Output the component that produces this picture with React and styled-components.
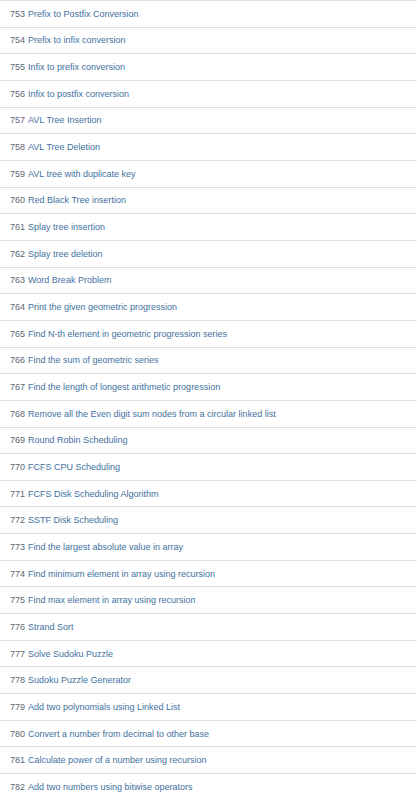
import React from "react";
import styled, { createGlobalStyle } from "styled-components";

const GlobalStyle = createGlobalStyle`
  html, body {
    margin: 0;
    padding: 0;
    background: #ffffff;
  }
  body {
    font-family: "Liberation Sans", Arial, sans-serif;
  }
`;

const List = styled.ul`
  list-style: none;
  margin: 0;
  padding: 0;
  width: 417px;
`;

const Item = styled.li`
  display: flex;
  align-items: center;
  box-sizing: border-box;
  height: 26.667px;
  padding: 0 10px;
  border-top: 1px solid #dedede;
  font-size: 9px;
  white-space: nowrap;
`;

const Num = styled.span`
  color: #5d6670;
  margin-right: 3px;
`;

const Title = styled.a`
  color: #3f71a0;
  text-decoration: none;
`;

const items = [
  [753, "Prefix to Postfix Conversion"],
  [754, "Prefix to infix conversion"],
  [755, "Infix to prefix conversion"],
  [756, "Infix to postfix conversion"],
  [757, "AVL Tree Insertion"],
  [758, "AVL Tree Deletion"],
  [759, "AVL tree with duplicate key"],
  [760, "Red Black Tree insertion"],
  [761, "Splay tree insertion"],
  [762, "Splay tree deletion"],
  [763, "Word Break Problem"],
  [764, "Print the given geometric progression"],
  [765, "Find N-th element in geometric progression series"],
  [766, "Find the sum of geometric series"],
  [767, "Find the length of longest arithmetic progression"],
  [768, "Remove all the Even digit sum nodes from a circular linked list"],
  [769, "Round Robin Scheduling"],
  [770, "FCFS CPU Scheduling"],
  [771, "FCFS Disk Scheduling Algorithm"],
  [772, "SSTF Disk Scheduling"],
  [773, "Find the largest absolute value in array"],
  [774, "Find minimum element in array using recursion"],
  [775, "Find max element in array using recursion"],
  [776, "Strand Sort"],
  [777, "Solve Sudoku Puzzle"],
  [778, "Sudoku Puzzle Generator"],
  [779, "Add two polynomials using Linked List"],
  [780, "Convert a number from decimal to other base"],
  [781, "Calculate power of a number using recursion"],
  [782, "Add two numbers using bitwise operators"],
];

const App = () => {
  return (
    <>
      <GlobalStyle />
      <List>
        {items.map(([n, t]) => (
          <Item key={n}>
            <Num>{n}</Num>
            <Title href="#">{t}</Title>
          </Item>
        ))}
      </List>
    </>
  );
};

export default App;
